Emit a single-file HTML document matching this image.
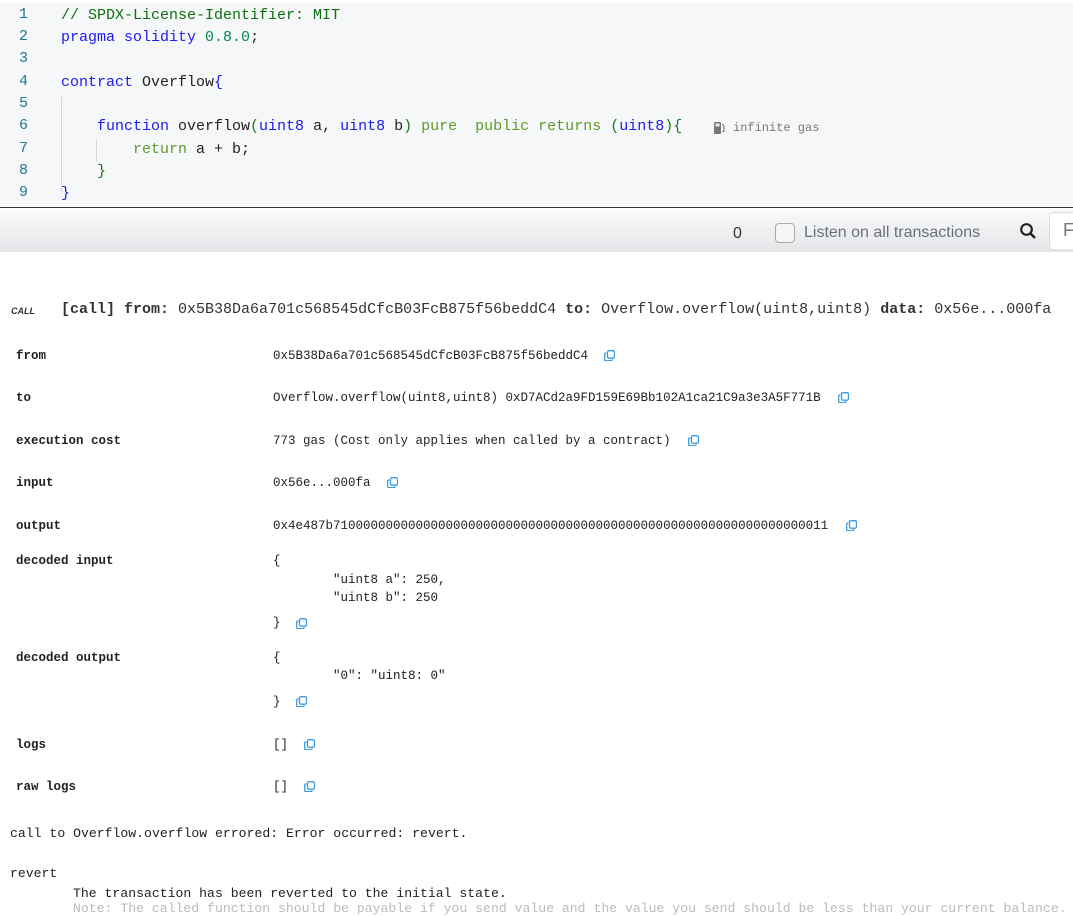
<!DOCTYPE html>
<html><head><meta charset="utf-8"><style>
*{margin:0;padding:0;box-sizing:border-box}
body{width:1073px;height:907px;overflow:hidden;background:#fff;font-family:"Liberation Mono","DejaVu Sans Mono",monospace;position:relative;color:#222}
.a{position:absolute;white-space:pre}
.code{position:absolute;left:0;top:3px;width:1073px;height:205px;background:#f6f7f9;border-bottom:1.5px solid #333}
.ln{position:absolute;left:0;width:28px;text-align:right;color:#237893;font-size:15px;font-family:"Liberation Mono",monospace}
.c{font-size:15px;line-height:20px;color:#222}
.g{color:#1a7b1a}.b{color:#1b1bf2}.n{color:#09885a}.p{color:#5c9b2a}.d{color:#0d6e0d}
.lab{font-size:12.5px;font-weight:bold;left:16px;color:#222}
.val{font-size:12.5px;left:273px;color:#222}
.cp{position:absolute;width:11px;height:11px}
.sh{position:absolute;left:0;top:3px;width:1073px;height:907px}
</style></head><body>
<div class="a" style="left:0;top:0;width:1073px;height:3px;background:#fff"></div>
<div class="code"></div>
<div class="a" style="left:61px;top:97px;width:1px;height:96px;background:#d6d6d6"></div>
<div class="a" style="left:96px;top:140px;width:1px;height:22px;background:#d6d6d6"></div>
<div class="ln a" style="top:6px">1</div>
<div class="ln a" style="top:28px">2</div>
<div class="ln a" style="top:50px">3</div>
<div class="ln a" style="top:73px">4</div>
<div class="ln a" style="top:95px">5</div>
<div class="ln a" style="top:117px">6</div>
<div class="ln a" style="top:140px">7</div>
<div class="ln a" style="top:162px">8</div>
<div class="ln a" style="top:184px">9</div>
<div class="a c d" style="left:61px;top:6px">// SPDX-License-Identifier: MIT</div>
<div class="a c" style="left:61px;top:28px"><span class="b">pragma solidity</span> <span class="n">0.8.0</span>;</div>
<div class="a c" style="left:61px;top:73px"><span class="b">contract</span> Overflow<span class="b">{</span></div>
<div class="a c" style="left:97px;top:117px"><span class="b">function</span> overflow<span class="g">(</span><span class="b">uint8</span> a, <span class="b">uint8</span> b<span class="g">)</span> <span class="p">pure</span>  <span class="p">public returns</span> <span class="g">(</span><span class="b">uint8</span><span class="g">){</span></div>
<div class="a c" style="left:133px;top:140px"><span class="p">return</span> a + b;</div>
<div class="a c g" style="left:97px;top:162px">}</div>
<div class="a c b" style="left:61px;top:184px">}</div>
<svg class="a" style="left:713px;top:122px" width="14" height="12" viewBox="0 0 14 12"><rect x="1" y="0" width="7" height="12" rx="1" fill="#777"/><rect x="2.5" y="1.5" width="4" height="3" fill="#eee"/><path d="M9 2 L11 4 L11 9 L9.5 10" stroke="#777" fill="none" stroke-width="1.2"/></svg>
<div class="a" style="left:733px;top:121px;font-size:12px;color:#777">infinite gas</div>
<div class="a" style="left:0;top:209px;width:1073px;height:43px;background:linear-gradient(#fafbfb,#e3e5e8)"></div>
<div class="sh">
<div class="a" style="left:733px;top:222px;font-family:'Liberation Sans',sans-serif;font-size:16px;color:#333">0</div>
<div class="a" style="left:775px;top:220px;width:20px;height:20px;border:1.5px solid #aaa;border-radius:4px;background:#f4f5f6"></div>
<div class="a" style="left:804px;top:221px;font-family:'Liberation Sans',sans-serif;font-size:16px;color:#6c7179">Listen on all transactions</div>
<svg class="a" style="left:1019px;top:219px" width="18" height="18" viewBox="0 0 18 18"><circle cx="7.5" cy="7.5" r="5.3" stroke="#222" stroke-width="2.2" fill="none"/><path d="M11.5 11.5 L16 16" stroke="#222" stroke-width="2.4"/></svg>
<div class="a" style="left:1049px;top:209px;width:40px;height:38px;background:#fff;border:1px solid #ddd;border-radius:5px"></div>
<div class="a" style="left:1063px;top:217px;font-family:'Liberation Sans',sans-serif;font-size:18px;color:#777">F</div>
<div class="a" style="left:11px;top:303px;font-family:'Liberation Sans',sans-serif;font-size:9px;font-style:italic;font-weight:bold;color:#333">CALL</div>
<div class="a" style="left:61px;top:298px;font-size:15px;color:#333"><b>[call]</b> <b>from:</b> 0x5B38Da6a701c568545dCfcB03FcB875f56beddC4 <b>to:</b> Overflow.overflow(uint8,uint8) <b>data:</b> 0x56e...000fa</div>
<div class="a lab" style="top:346px">from</div><div class="a val" style="top:346px">0x5B38Da6a701c568545dCfcB03FcB875f56beddC4</div>
<div class="a lab" style="top:388px">to</div><div class="a val" style="top:388px">Overflow.overflow(uint8,uint8) 0xD7ACd2a9FD159E69Bb102A1ca21C9a3e3A5F771B</div>
<div class="a lab" style="top:431px">execution cost</div><div class="a val" style="top:431px">773 gas (Cost only applies when called by a contract)</div>
<div class="a lab" style="top:473px">input</div><div class="a val" style="top:473px">0x56e...000fa</div>
<div class="a lab" style="top:516px">output</div><div class="a val" style="top:516px">0x4e487b710000000000000000000000000000000000000000000000000000000000000011</div>
<div class="a lab" style="top:551px">decoded input</div>
<div class="a val" style="top:551px">{</div>
<div class="a val" style="left:333px;top:570px">"uint8 a": 250,</div>
<div class="a val" style="left:333px;top:588px">"uint8 b": 250</div>
<div class="a val" style="top:613px">}</div>
<div class="a lab" style="top:648px">decoded output</div>
<div class="a val" style="top:648px">{</div>
<div class="a val" style="left:333px;top:666px">"0": "uint8: 0"</div>
<div class="a val" style="top:692px">}</div>
<div class="a lab" style="top:735px">logs</div><div class="a val" style="top:735px">[]</div>
<div class="a lab" style="top:777px">raw logs</div><div class="a val" style="top:777px">[]</div>
<svg width="0" height="0" style="position:absolute"><defs><g id="cp"><rect x="3.5" y="0.7" width="7" height="7.5" rx="1.5" fill="none" stroke="#3d9be0" stroke-width="1.3"/><path d="M2.5 3 H1.8 Q0.7 3 0.7 4.2 V9.6 Q0.7 10.6 1.8 10.6 H7 Q8 10.6 8 9.6 V9.2" fill="none" stroke="#3d9be0" stroke-width="1.3"/></g></defs></svg>
<svg class="cp" style="left:604px;top:347px"><use href="#cp"/></svg>
<svg class="cp" style="left:838px;top:389px"><use href="#cp"/></svg>
<svg class="cp" style="left:688px;top:432px"><use href="#cp"/></svg>
<svg class="cp" style="left:387px;top:474px"><use href="#cp"/></svg>
<svg class="cp" style="left:846px;top:517px"><use href="#cp"/></svg>
<svg class="cp" style="left:296px;top:615px"><use href="#cp"/></svg>
<svg class="cp" style="left:296px;top:693px"><use href="#cp"/></svg>
<svg class="cp" style="left:304px;top:736px"><use href="#cp"/></svg>
<svg class="cp" style="left:304px;top:778px"><use href="#cp"/></svg>
<div class="a" style="left:10px;top:823px;font-size:13.15px;color:#222">call to Overflow.overflow errored: Error occurred: revert.</div>
<div class="a" style="left:10px;top:863px;font-size:13.15px;color:#222">revert</div>
<div class="a" style="left:73px;top:883px;font-size:13.15px;color:#222">The transaction has been reverted to the initial state.</div>
<div class="a" style="left:73px;top:898px;font-size:13.15px;color:#bbb">Note: The called function should be payable if you send value and the value you send should be less than your current balance.</div>
</div>
</body></html>
